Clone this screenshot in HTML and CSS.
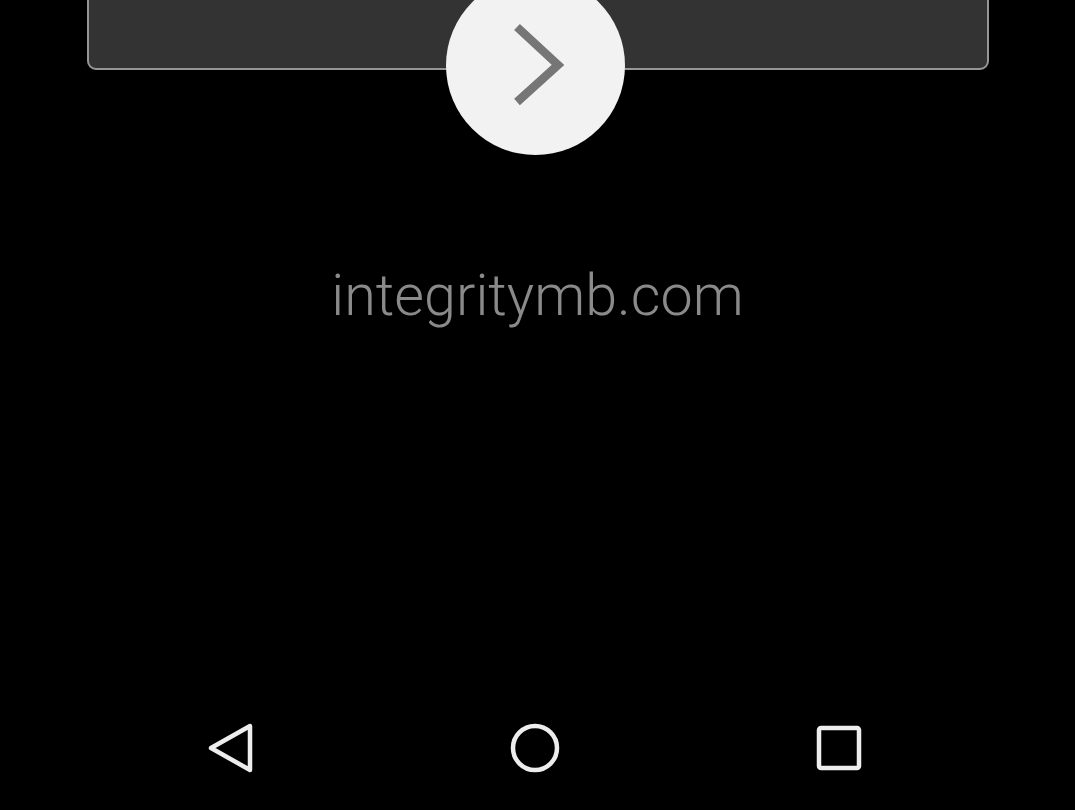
FILE: index.html
```html
<!DOCTYPE html>
<html>
<head>
<meta charset="utf-8">
<link rel="stylesheet" href="styles.css">
</head>
<body>
<div class="screen">
  <div class="top">
    <div class="card"></div>
    <div class="fab">
      <svg width="179" height="179" viewBox="0 0 179 179">
        <polyline points="71,51 112,89 71,126" fill="none" stroke="#767676" stroke-width="8.5"/>
      </svg>
    </div>
  </div>
  <div class="domain">integritymb.com</div>
  <div class="spacer"></div>
  <nav class="navbar">
    <div class="navbtn">
      <svg width="60" height="60" viewBox="0 0 60 60">
        <polygon points="13,30 52,8 52,52" fill="none" stroke="#ededed" stroke-width="4.5" stroke-linejoin="round"/>
      </svg>
    </div>
    <div class="navbtn">
      <svg width="60" height="60" viewBox="0 0 60 60">
        <circle cx="30" cy="30" r="22" fill="none" stroke="#ededed" stroke-width="4.5"/>
      </svg>
    </div>
    <div class="navbtn">
      <svg width="60" height="60" viewBox="0 0 60 60">
        <rect x="10" y="10" width="40" height="40" rx="2" fill="none" stroke="#ededed" stroke-width="4.5"/>
      </svg>
    </div>
  </nav>
</div>
</body>
</html>
```

FILE: styles.css
```css
html, body {
  margin: 0;
  padding: 0;
  background: #000;
  overflow: hidden;
}
.screen {
  width: 1075px;
  height: 810px;
  display: flex;
  flex-direction: column;
  font-family: Roboto, "Noto Sans", sans-serif;
}
.top {
  position: relative;
  height: 160px;
  flex: none;
}
.card {
  margin: -40px 0 0 87px;
  width: 898px;
  height: 106px;
  background: #333333;
  border: 2px solid #969696;
  border-radius: 9px;
}
.fab {
  position: absolute;
  left: 446px;
  top: -24px;
  width: 179px;
  height: 179px;
  border-radius: 50%;
  background: #f2f2f2;
}
.fab svg {
  display: block;
}
.domain {
  margin-top: 104px;
  text-align: center;
  color: #8a8a8a;
  font-weight: 300;
  font-size: 57.5px;
  line-height: 64px;
  letter-spacing: 0;
}
.spacer {
  flex: 1;
}
.navbar {
  flex: none;
  height: 126px;
  display: grid;
  grid-template-columns: 198px 60px 247px 60px 244px 60px 1fr;
  align-items: start;
}
.navbtn {
  padding-top: 34px;
}
.navbtn:nth-child(1) { grid-column: 2; }
.navbtn:nth-child(2) { grid-column: 4; }
.navbtn:nth-child(3) { grid-column: 6; }
.navbtn svg { display: block; }
```
